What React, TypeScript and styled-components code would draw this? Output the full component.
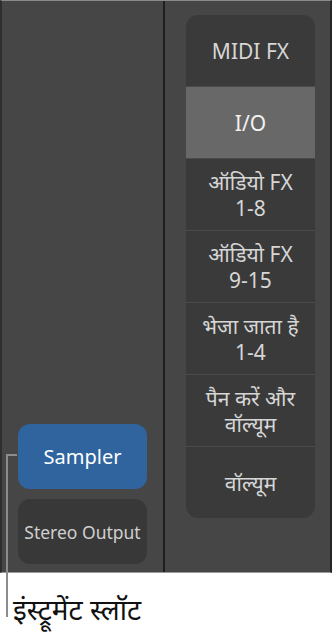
import styled, { createGlobalStyle } from 'styled-components';

const GlobalStyle = createGlobalStyle`
  html, body {
    margin: 0;
    padding: 0;
    background: #ffffff;
  }
  body {
    font-family: 'Noto Sans', 'Noto Sans Devanagari', 'Liberation Sans', sans-serif;
  }
`;

const Page = styled.div`
  position: relative;
  width: 335px;
  height: 641px;
  overflow: hidden;
`;

const Mixer = styled.div`
  width: 332px;
  height: 573px;
  box-sizing: border-box;
  display: grid;
  grid-template-columns: 161px 2px 1fr;
  background: #464646;
  border-top: 1px solid #8a8a8a;
  border-bottom: 1px solid #9a9a9a;
  border-left: 2px solid #2e2e2e;
  border-right: 2px solid #262626;
`;

const InstrumentStrip = styled.div`
  display: flex;
  flex-direction: column;
  justify-content: flex-end;
  gap: 10px;
  padding: 0 0 8px 16px;
`;

const Divider = styled.div`
  background: #1f1f1f;
`;

const SlotButton = styled.div<{ $active?: boolean }>`
  width: 129px;
  height: 65px;
  border-radius: 12px;
  display: flex;
  align-items: center;
  justify-content: center;
  white-space: nowrap;
  background: ${({ $active }) => ($active ? '#2f649f' : '#383838')};
  color: ${({ $active }) => ($active ? '#ffffff' : '#cfcfcf')};
  font-size: ${({ $active }) => ($active ? '20px' : '17.5px')};
`;

const FxColumn = styled.div`
  padding: 14px 0 0 21px;
`;

const FxCard = styled.div`
  width: 129px;
  border-radius: 12px;
  overflow: hidden;
  display: flex;
  flex-direction: column;
  gap: 1px;
  background: #4a4a4a;
`;

const FxRow = styled.div<{ $selected?: boolean }>`
  height: 71px;
  display: flex;
  align-items: center;
  justify-content: center;
  text-align: center;
  white-space: nowrap;
  background: ${({ $selected }) => ($selected ? '#686868' : '#3a3a3a')};
  color: ${({ $selected }) => ($selected ? '#f2f2f2' : '#d6d6d6')};
  font-size: 21px;
  line-height: 26px;
`;

const CalloutLine = styled.div`
  position: absolute;
  left: 6px;
  top: 454px;
  width: 11px;
  height: 163px;
  border-left: 2px solid #8c8c8c;
  border-top: 2px solid #8c8c8c;
  box-sizing: border-box;
`;

const CalloutLabel = styled.div`
  padding: 16px 0 0 13px;
  font-size: 28px;
  line-height: 40px;
  color: #111111;
`;

const fxRows = [
  { label: 'MIDI FX' },
  { label: 'I/O', selected: true },
  { label: 'ऑडियो FX\n1-8' },
  { label: 'ऑडियो FX\n9-15' },
  { label: 'भेजा जाता है\n1-4' },
  { label: 'पैन करें और\nवॉल्यूम' },
  { label: 'वॉल्यूम' }
];

export default function App() {
  return (
    <Page>
      <GlobalStyle />
      <Mixer>
        <InstrumentStrip>
          <SlotButton $active>Sampler</SlotButton>
          <SlotButton>Stereo Output</SlotButton>
        </InstrumentStrip>
        <Divider />
        <FxColumn>
          <FxCard>
            {fxRows.map((row) => (
              <FxRow key={row.label} $selected={row.selected}>
                <span>
                  {row.label.split('\n').map((line, i) => (
                    <div key={i}>{line}</div>
                  ))}
                </span>
              </FxRow>
            ))}
          </FxCard>
        </FxColumn>
      </Mixer>
      <CalloutLine />
      <CalloutLabel>इंस्ट्रूमेंट स्लॉट</CalloutLabel>
    </Page>
  );
}
